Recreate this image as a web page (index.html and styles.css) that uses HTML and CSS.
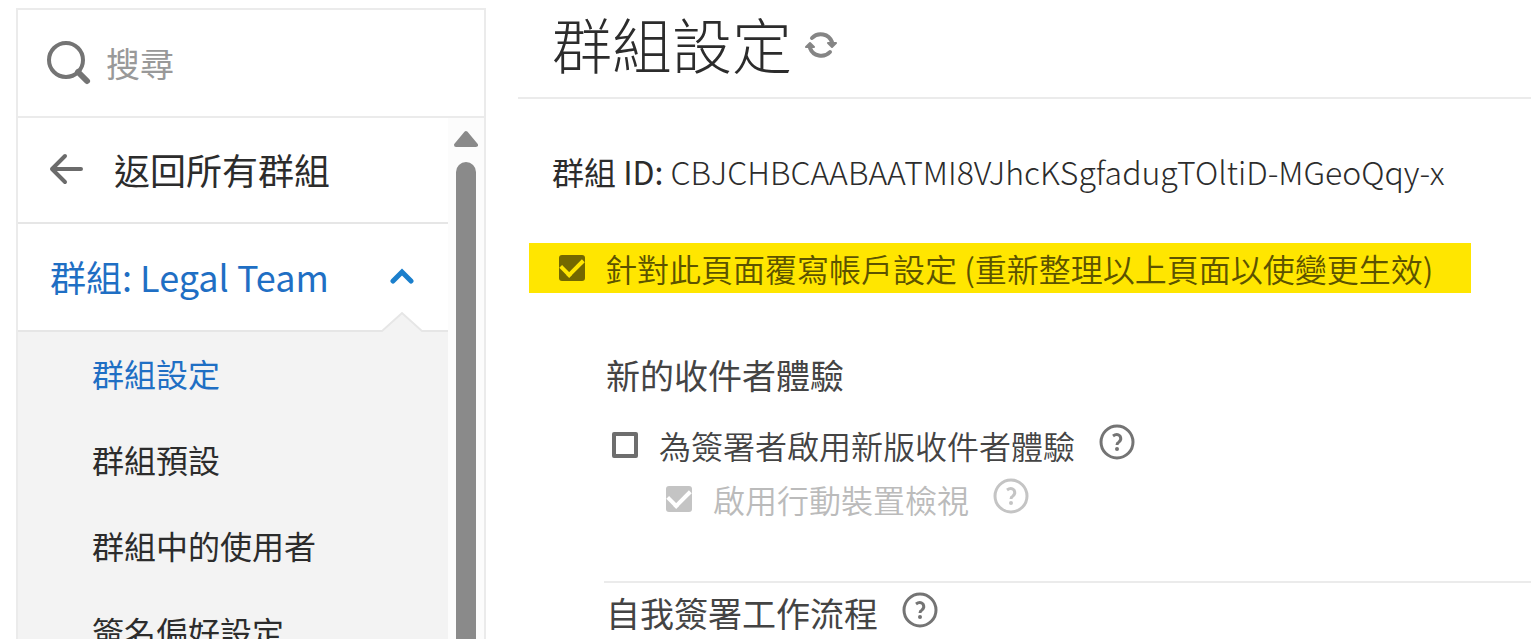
FILE: index.html
```html
<!DOCTYPE html>
<html lang="zh-Hant">
<head>
  <meta charset="UTF-8" />
  <meta name="viewport" content="width=device-width, initial-scale=1.0"/>
  <title>群組設定</title>
  <link rel="stylesheet" href="styles.css">
</head>
<body>

  <div class="page">
    <aside class="sidebar">
      <label class="search">
        <svg class="search-icon" viewBox="0 0 46 46" fill="none" stroke="#747474" stroke-width="4">
          <circle cx="20" cy="20" r="17"/>
          <path d="M32 32l9 9" stroke-width="6" stroke-linecap="round"/>
        </svg>
        <input type="search" placeholder="搜尋" aria-label="搜尋" />
      </label>

      <div class="sidebar-body">
        <nav class="nav">
          <a class="back" href="#">
            <svg class="back-icon" viewBox="0 0 36 34" fill="none" stroke="#6b6b6b" stroke-width="4" stroke-linecap="round" stroke-linejoin="round">
              <path d="M33 17H4M17 4L4 17l13 13"/>
            </svg>
            返回所有群組
          </a>
          <button class="group" type="button" aria-expanded="true">
            群組: Legal Team
            <svg class="chevron" viewBox="0 0 24 16" fill="none" stroke="#1b7fcc" stroke-width="5" stroke-linecap="round">
              <path d="M3 13l9-9 9 9"/>
            </svg>
            <svg class="notch" viewBox="0 0 40 22">
              <path d="M0 22L1 20L20 2L39 20L40 22Z" fill="#f3f3f3"/>
              <path d="M0 20L20 2L40 20" fill="none" stroke="#e6e6e6" stroke-width="2"/>
            </svg>
          </button>
          <ul class="submenu">
            <li><a class="active" href="#">群組設定</a></li>
            <li><a href="#">群組預設</a></li>
            <li><a href="#">群組中的使用者</a></li>
            <li><a href="#">簽名偏好設定</a></li>
          </ul>
        </nav>
        <div class="scrollbar">
          <svg class="scroll-up" viewBox="0 0 24 18" fill="#8a8a8a" stroke="#8a8a8a" stroke-width="4" stroke-linejoin="round">
            <path d="M12 3L22 15H2Z"/>
          </svg>
          <div class="thumb"></div>
        </div>
      </div>
    </aside>

    <main class="content">
      <header class="title">
        <h1>群組設定</h1>
        <button class="refresh" type="button" aria-label="重新整理">
          <svg viewBox="0 0 34 34" fill="none" stroke="#858585" stroke-width="4" stroke-linecap="round">
            <path d="M8 10A12 12 0 0 1 28 14"/>
            <path d="M26 24A12 12 0 0 1 6 20"/>
            <path d="M24 15H32L28 19Z" fill="#858585" stroke-width="2" stroke-linejoin="round"/>
            <path d="M2 19H10L6 15Z" fill="#858585" stroke-width="2" stroke-linejoin="round"/>
          </svg>
        </button>
      </header>

      <p class="group-id"><strong>群組 ID:</strong> CBJCHBCAABAATMI8VJhcKSgfadugTOltiD-MGeoQqy-x</p>

      <label class="override">
        <input type="checkbox" checked />
        針對此頁面覆寫帳戶設定 (重新整理以上頁面以使變更生效)
      </label>

      <section class="section">
        <h2>新的收件者體驗</h2>
        <div class="option">
          <label><input type="checkbox" /> 為簽署者啟用新版收件者體驗</label>
          <button class="help" type="button" aria-label="說明">
            <svg viewBox="0 0 36 36" fill="none" stroke="#747474" stroke-width="3">
              <circle cx="18" cy="18" r="16"/>
              <path d="M14 12Q18 9 21 12Q23 15 20 18Q18 19 18 21" stroke-width="3"/>
              <circle cx="18" cy="25" r="2" fill="#747474" stroke="none"/>
            </svg>
          </button>
        </div>
        <div class="option sub">
          <label><input type="checkbox" checked disabled /> 啟用行動裝置檢視</label>
          <button class="help" type="button" aria-label="說明" disabled>
            <svg viewBox="0 0 36 36" fill="none" stroke="#c4c4c4" stroke-width="3">
              <circle cx="18" cy="18" r="16"/>
              <path d="M14 12Q18 9 21 12Q23 15 20 18Q18 19 18 21" stroke-width="3"/>
              <circle cx="18" cy="25" r="2" fill="#c4c4c4" stroke="none"/>
            </svg>
          </button>
        </div>
      </section>

      <section class="section workflow">
        <h2>自我簽署工作流程</h2>
        <button class="help" type="button" aria-label="說明">
          <svg viewBox="0 0 36 36" fill="none" stroke="#747474" stroke-width="3">
            <circle cx="18" cy="18" r="16"/>
            <path d="M14 12Q18 9 21 12Q23 15 20 18Q18 19 18 21" stroke-width="3"/>
            <circle cx="18" cy="25" r="2" fill="#747474" stroke="none"/>
          </svg>
        </button>
      </section>
    </main>
  </div>

</body>
</html>
```
FILE: styles.css
```css
* {
  box-sizing: border-box;
}

body {
  margin: 0;
  background: #fff;
  color: #2c2c2c;
  font-family: "Noto Sans CJK TC", sans-serif;
  font-size: 32px;
  line-height: 48px;
}

h1, h2, p, ul {
  margin: 0;
  padding: 0;
}

a {
  color: inherit;
  text-decoration: none;
}

button {
  padding: 0;
  border: none;
  background: none;
  font: inherit;
  color: inherit;
  cursor: pointer;
}

svg {
  display: block;
  flex-shrink: 0;
}

.page {
  display: flex;
  gap: 32px;
  height: 100vh;
  padding: 8px 0 0 16px;
  overflow: hidden;
}

/* sidebar */
.sidebar {
  display: flex;
  flex-direction: column;
  flex: 0 0 470px;
  border: 2px solid #ebebeb;
  border-bottom: none;
}

.search {
  display: flex;
  align-items: center;
  gap: 14px;
  height: 108px;
  padding-left: 28px;
  border-bottom: 2px solid #ebebeb;
  flex-shrink: 0;
}

.search-icon {
  width: 46px;
  height: 46px;
}

.search input {
  flex: 1;
  min-width: 0;
  padding: 0;
  border: none;
  outline: none;
  font: inherit;
  font-size: 34px;
}

.search input::placeholder {
  color: #999;
}

.sidebar-body {
  display: flex;
  flex: 1;
  min-height: 0;
}

.nav {
  flex: 1;
  overflow: hidden;
}

.back, .group {
  display: flex;
  align-items: center;
  width: 100%;
  font-size: 36px;
  border-bottom: 2px solid #e6e6e6;
}

.back {
  gap: 30px;
  height: 106px;
  padding: 0 0 2px 30px;
}

.back-icon {
  width: 36px;
  height: 34px;
}

.group {
  position: relative;
  justify-content: space-between;
  height: 108px;
  padding: 0 34px 2px 32px;
  color: #1f6fc4;
}

.chevron {
  width: 24px;
  height: 16px;
}

.notch {
  position: absolute;
  right: 26px;
  bottom: -3px;
  width: 40px;
  height: 22px;
}

.submenu {
  list-style: none;
  background: #f3f3f3;
}

.submenu a {
  display: block;
  height: 86px;
  padding-left: 74px;
  line-height: 82px;
}

.submenu .active {
  color: #1f6fc4;
}

.scrollbar {
  display: flex;
  flex-direction: column;
  align-items: center;
  gap: 14px;
  width: 36px;
  padding-top: 12px;
  background: #fcfcfc;
}

.scroll-up {
  width: 24px;
  height: 18px;
}

.thumb {
  flex: 1;
  width: 20px;
  border-radius: 10px 10px 0 0;
  background: #8a8a8a;
}

/* main column */
.content {
  flex: 1;
  min-width: 0;
}

.title {
  display: flex;
  align-items: center;
  gap: 12px;
  height: 91px;
  padding: 0 0 20px 34px;
  border-bottom: 2px solid #ebebeb;
}

.title h1 {
  font-size: 60px;
  font-weight: 300;
}

.refresh {
  padding-top: 4px;
}

.refresh svg {
  width: 34px;
  height: 34px;
}

.group-id {
  padding: 48px 0 0 34px;
  font-weight: 300;
  white-space: nowrap;
}

.group-id strong {
  font-weight: 400;
}

.override {
  display: inline-flex;
  align-items: center;
  gap: 20px;
  height: 50px;
  margin: 48px 0 0 11px;
  padding: 0 38px 0 30px;
  background: #ffe600;
  color: #5c5300;
  font-weight: 350;
  white-space: nowrap;
}

input[type="checkbox"] {
  appearance: none;
  flex-shrink: 0;
  width: 26px;
  height: 26px;
  margin: 0;
  border: 4px solid #6e6e6e;
  border-radius: 2px;
}

input[type="checkbox"]:checked {
  display: grid;
  place-items: center;
  border: none;
  border-radius: 3px;
  background: #c4c4c4;
}

input[type="checkbox"]:checked::before {
  content: "";
  width: 18px;
  height: 10px;
  margin-bottom: 6px;
  border: solid #fff;
  border-width: 0 0 4px 4px;
  transform: rotate(-45deg);
}

.override input[type="checkbox"]:checked {
  background: #736800;
}

.override input[type="checkbox"]:checked::before {
  border-color: #ffe600;
}

.section {
  margin-left: 86px;
  padding-top: 58px;
}

.section h2 {
  padding-left: 2px;
  font-size: 34px;
  font-weight: 400;
  color: #444;
}

.option {
  display: flex;
  align-items: center;
  gap: 24px;
  margin-top: 22px;
  padding-left: 8px;
  color: #444;
  font-weight: 350;
}

.option label {
  display: flex;
  align-items: center;
  gap: 21px;
}

.option.sub {
  margin-top: 6px;
  padding-left: 62px;
  color: #bbb;
}

.help {
  padding-bottom: 6px;
}

.help svg {
  width: 36px;
  height: 36px;
}

.workflow {
  display: flex;
  align-items: center;
  gap: 24px;
  margin-top: 58px;
  padding-top: 6px;
  border-top: 2px solid #ebebeb;
}
```
